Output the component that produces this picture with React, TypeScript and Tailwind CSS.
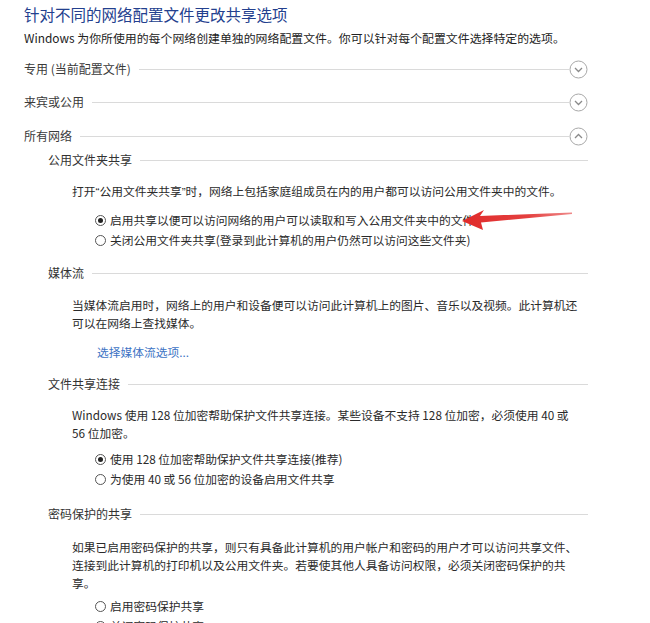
import type { ReactNode } from "react";

// Windows "高级共享设置" panel: collapsible profile headers, then the
// expanded "所有网络" group with its option sections.

function ProfileHeader({
  label,
  expanded,
  className,
}: {
  label: string;
  expanded: boolean;
  className: string;
}) {
  return (
    <div className={`flex h-5 items-center ${className}`}>
      <span className="text-[12px] text-[#3a3a3a]">{label}</span>
      <div className="ml-2 h-px flex-1 bg-[#dadada]" />
      <svg width="19" height="19" viewBox="0 0 19 19" className="shrink-0">
        <circle cx="9.5" cy="9.5" r="8.5" fill="none" stroke="#a8a8a8" strokeWidth="1" />
        <path
          d={expanded ? "M6 11 L9.5 7.5 L13 11" : "M6 8 L9.5 11.5 L13 8"}
          fill="none"
          stroke="#8a8a8a"
          strokeWidth="1.3"
        />
      </svg>
    </div>
  );
}

function GroupHeader({ label, className }: { label: string; className: string }) {
  return (
    <div className={`ml-6 flex h-5 items-center ${className}`}>
      <span className="text-[12px] text-[#333]">{label}</span>
      <div className="ml-2 h-px flex-1 bg-[#dadada]" />
    </div>
  );
}

function Para({ children, className }: { children: ReactNode; className: string }) {
  return (
    <p className={`ml-12 text-[11.75px] leading-[18px] text-[#2a2a2a] ${className}`}>{children}</p>
  );
}

function Radio({
  label,
  checked,
  className = "",
}: {
  label: string;
  checked?: boolean;
  className?: string;
}) {
  return (
    <div className={`ml-[71px] flex h-5 items-center gap-[4px] ${className}`}>
      <span className="flex h-[11px] w-[11px] shrink-0 items-center justify-center rounded-full border border-[#555] bg-white">
        {checked ? <span className="h-[5px] w-[5px] rounded-full bg-[#222]" /> : null}
      </span>
      <span className="whitespace-nowrap text-[11.75px] text-[#2a2a2a]">{label}</span>
    </div>
  );
}

const q = "font-['Liberation_Sans',sans-serif]";

export default function App() {
  return (
    <div className="relative h-[623px] w-[650px] overflow-hidden bg-white font-['Noto_Sans_CJK_SC',sans-serif]">
      <div className="w-[588px] pl-6 pt-1">
        <h1 className="h-5 text-[15.5px] leading-5 text-[#23408e]">
          针对不同的网络配置文件更改共享选项
        </h1>
        <p className="mt-1 h-5 text-[11.9px] leading-5 text-[#222]">
          Windows 为你所使用的每个网络创建单独的网络配置文件。你可以针对每个配置文件选择特定的选项。
        </p>

        <ProfileHeader label="专用 (当前配置文件)" expanded={false} className="mt-[11px]" />
        <ProfileHeader label="来宾或公用" expanded={false} className="mt-[13px]" />
        <ProfileHeader label="所有网络" expanded className="mt-[14px]" />

        <GroupHeader label="公用文件夹共享" className="mt-1" />
        <Para className="mt-3">
          打开<span className={q}>“</span>公用文件夹共享<span className={q}>”</span>
          时，网络上包括家庭组成员在内的用户都可以访问公用文件夹中的文件。
        </Para>
        <Radio
          checked
          className="mt-[9px]"
          label="启用共享以便可以访问网络的用户可以读取和写入公用文件夹中的文件"
        />
        <Radio label="关闭公用文件夹共享(登录到此计算机的用户仍然可以访问这些文件夹)" />

        <GroupHeader label="媒体流" className="mt-[13px]" />
        <Para className="mt-[13px]">
          当媒体流启用时，网络上的用户和设备便可以访问此计算机上的图片、音乐以及视频。此计算机还
          <br />
          可以在网络上查找媒体。
        </Para>
        <div className="ml-[73px] mt-[10px] h-5 text-[11.75px] leading-5 text-[#3d73c4]">
          选择媒体流选项...
        </div>

        <GroupHeader label="文件共享连接" className="mt-3" />
        <Para className="mt-3">
          Windows 使用 128 位加密帮助保护文件共享连接。某些设备不支持 128 位加密，必须使用 40 或
          <br />
          56 位加密。
        </Para>
        <Radio checked className="mt-[7px]" label="使用 128 位加密帮助保护文件共享连接(推荐)" />
        <Radio label="为使用 40 或 56 位加密的设备启用文件共享" />

        <GroupHeader label="密码保护的共享" className="mt-[15px]" />
        <Para className="mt-[14px]">
          如果已启用密码保护的共享，则只有具备此计算机的用户帐户和密码的用户才可以访问共享文件、
          <br />
          连接到此计算机的打印机以及公用文件夹。若要使其他人具备访问权限，必须关闭密码保护的共
          <br />
          享。
        </Para>
        <Radio className="mt-1" label="启用密码保护共享" />
        <Radio checked label="关闭密码保护共享" />
      </div>

      {/* red annotation arrow pointing at the first radio option */}
      <svg
        width="116"
        height="28"
        viewBox="0 0 116 28"
        className="absolute left-[460px] top-[205px]"
      >
        <defs>
          <linearGradient id="arrowFill" x1="0" y1="0" x2="1" y2="0">
            <stop offset="0" stopColor="#e02a2a" />
            <stop offset="0.6" stopColor="#e4403f" />
            <stop offset="1" stopColor="#ef8a8a" />
          </linearGradient>
        </defs>
        <polygon
          points="2,16 24,5 20,11 112,7.5 112,9 21,17.5 23,25"
          fill="url(#arrowFill)"
        />
      </svg>
    </div>
  );
}
